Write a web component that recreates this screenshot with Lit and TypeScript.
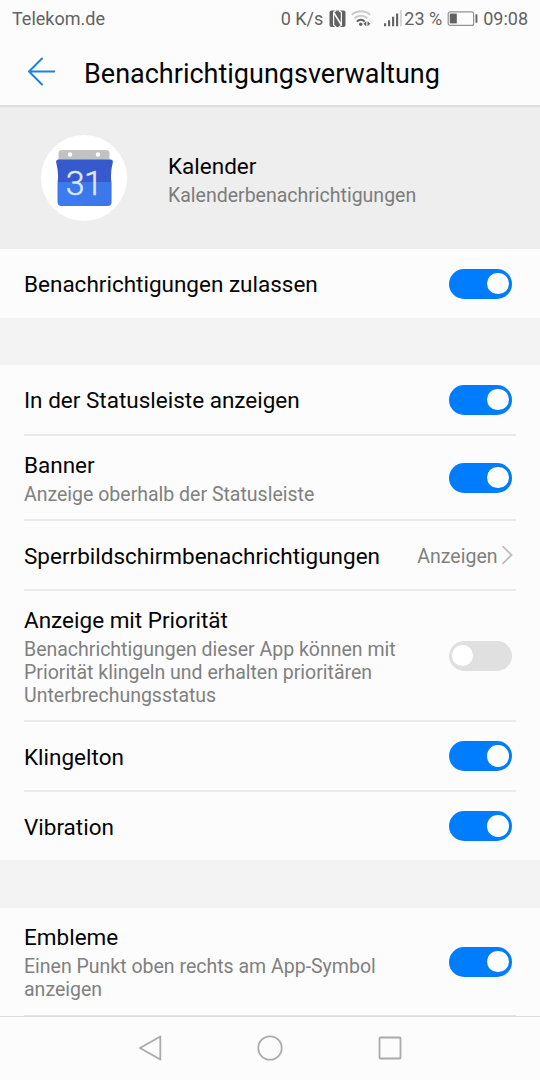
import { LitElement, html, css, svg, nothing } from "lit";
import { customElement, property } from "lit/decorators.js";
import { classMap } from "lit/directives/class-map.js";

@customElement("toggle-switch")
class ToggleSwitch extends LitElement {
  @property({ type: Boolean }) on = false;

  static styles = css`
    :host { display: block; flex: none; }
    .track {
      display: flex; align-items: center; box-sizing: border-box;
      width: 63px; height: 30px; padding: 0 3px; border-radius: 15px;
      background: #e0e0e0;
    }
    .track.on { background: #007dff; justify-content: flex-end; }
    .knob { width: 21.5px; height: 21.5px; border-radius: 50%; background: #fff; }
  `;

  render() {
    return html`<div class=${classMap({ track: true, on: this.on })} role="switch" aria-checked=${this.on}>
      <div class="knob"></div>
    </div>`;
  }
}

@customElement("status-bar")
class StatusBar extends LitElement {
  static styles = css`
    :host { display: flex; align-items: center; height: 38px; padding: 0 12px; color: #626262; font-size: 18px; line-height: 38px; }
    .carrier { flex: 1; }
    .icons { flex: none; display: block; }
    .nfc { margin: 0 5px 0 6px; }
    .signal { margin: 0 2px 0 13px; }
    .battery { margin: 0 5px; }
  `;

  render() {
    return html`
      <span class="carrier">Telekom.de</span>
      <span>0 K/s</span>
      <svg class="icons nfc" width="17" height="18" viewBox="0 0 17 18">
        <rect x="0.500" y="0.500" width="16" height="16.400" rx="2" fill="#626262" />
        <path d="M7.200 0.500L4.600 2.200V15L7.200 16.900M9.800 0.500L12.400 2.400V15.200L9.800 16.900" stroke="#fcfcfc" stroke-width="1.200" fill="none" />
        <path d="M4.800 2.800L12.200 14.600" stroke="#fcfcfc" stroke-width="1.600" fill="none" />
      </svg>
      <svg class="icons" width="20" height="18" viewBox="0 0 20 18" fill="none" stroke-width="1.9">
        <path d="M.8 4.700C6 .1 14 .1 19.200 4.700" stroke="#c9c9c9" />
        <path d="M3.500 8.300C7.200 4.800 12.800 4.800 16.500 8.300" stroke="#c9c9c9" />
        <path d="M5.800 11.700C8.200 9.100 11.300 9.100 13.700 11.700" stroke="#626262" />
        <circle cx="9.700" cy="14.300" r="1.700" fill="#626262" />
        <path d="M15.300 11.300V16.300L12.400 13.800ZM16.500 11.300V16.300L19.400 13.800Z" fill="#626262" />
      </svg>
      <svg class="icons signal" width="18" height="18" viewBox="0 0 18 18">
        <path d="M1.100 13.200v3M5.100 10.200v6M9.100 6.700v9.500M13.100 3.400v12.800" stroke="#626262" stroke-width="2.100" />
        <path d="M16.900 0v16.200" stroke="#d6d6d6" stroke-width="2" />
      </svg>
      <span>23 %</span>
      <svg class="icons battery" width="31" height="16" viewBox="0 0 31 16">
        <rect x="1.200" y=".8" width="25.400" height="13.600" rx="2" fill="none" stroke="#929292" stroke-width="1.200" />
        <rect x="2.800" y="2.600" width="7" height="9.800" fill="#626262" />
        <rect x="28.500" y="3.200" width="1.900" height="8.500" rx=".5" fill="#626262" />
      </svg>
      <span>09:08</span>`;
  }
}

@customElement("calendar-icon")
class CalendarIcon extends LitElement {
  static styles = css`
    :host { display: block; flex: none; width: 86px; height: 86px; }
    .digits { font: 300 34px Roboto, sans-serif; letter-spacing: -0.500px; }
  `;

  render() {
    return html`<svg width="86" height="86" viewBox="0 0 86 86">
      <defs><clipPath id="sheet"><path d="M17 24.5H70Q72.500 25 71.700 28Q69 38 70.500 48V67Q70.500 71 66.500 71H20.500Q16.500 71 16.500 67V48Q18 38 15.300 28Q14.500 25 17 24.500Z" /></clipPath></defs>
      <circle cx="43" cy="43" r="43" fill="#fff" />
      <path d="M17.500 26V18.500Q17.500 15 21 15H65Q68.500 15 68.500 18.500V26Z" fill="#c2c2c2" />
      <circle cx="29" cy="19.500" r="2.200" fill="#fff" /><circle cx="57" cy="19.500" r="2.200" fill="#fff" />
      <g clip-path="url(#sheet)">
        <rect x="14" y="23" width="60" height="24" fill="#3659ce" />
        <rect x="14" y="47" width="60" height="25" fill="#3c7bed" />
        <path d="M27 55L43 71H71V47H40Z" fill="#3975e4" opacity=".35" />
      </g>
      <text class="digits" x="43" y="59.500" text-anchor="middle" fill="#dfe7fa" stroke="#dfe7fa" stroke-width=".5">31</text>
    </svg>`;
  }
}

@customElement("setting-row")
class SettingRow extends LitElement {
  @property() label = "";
  @property() detail = "";
  @property() value = "";
  @property({ type: Boolean }) on = false;

  static styles = css`
    :host { display: flex; box-sizing: border-box; align-items: center; justify-content: space-between; margin: 0 24px; padding-right: 4.500px; }
    :host([divided]) { border-bottom: 2px solid #eaeaea; }
    .text { flex: 1; padding-top: 2px; }
    .text.two { padding-top: 1px; }
    .label { font-size: 22.500px; line-height: 29px; color: #050505; white-space: nowrap; }
    .detail { margin-top: 3px; font-size: 19.500px; line-height: 23px; color: #808080; max-width: 385px; }
    .value { display: flex; align-items: center; gap: 3px; margin-right: -1px; font-size: 19.500px; color: #808080; }
    .value span { padding-top: 2px; }
    .chevron { display: block; }
  `;

  render() {
    return html`
      <div class=${classMap({ text: true, two: !!this.detail })}>
        <div class="label">${this.label}</div>
        ${this.detail ? html`<div class="detail">${this.detail}</div>` : nothing}
      </div>
      ${this.value
        ? html`<div class="value"><span>${this.value}</span>
            <svg class="chevron" width="12" height="20" viewBox="0 0 12 20"><path d="M1.500 1.200L10.500 10L1.500 18.800" fill="none" stroke="#bcbcbc" stroke-width="1.800" /></svg>
          </div>`
        : html`<toggle-switch ?on=${this.on}></toggle-switch>`}`;
  }
}

@customElement("app-root")
class AppRoot extends LitElement {
  static styles = css`
    :host { display: flex; flex-direction: column; width: 540px; height: 1080px; overflow: hidden; background: #fcfcfc; font-family: Roboto, sans-serif; }
    header { display: flex; align-items: center; box-sizing: border-box; height: 69px; flex: none; padding: 0 27px; gap: 28px; border-bottom: 2px solid #dedede; }
    h1 { margin: 0; padding-top: 5px; font-size: 27px; font-weight: 400; line-height: 36px; color: #050505; }
    .back { display: block; flex: none; }
    .app { display: flex; align-items: center; box-sizing: border-box; flex: none; height: 142px; padding: 0 41px; gap: 41px; background: #eeeeee; }
    .heading { padding-top: 5px; }
    .name { font-size: 22.500px; line-height: 29px; color: #050505; }
    .about { margin-top: 1px; font-size: 19.500px; line-height: 27px; color: #7c7c7c; }
    .gap { flex: none; background: #f3f3f3; height: 47px; }
    .gap.tall { height: 48px; }
    .row { flex: none; }
    .h68 { height: 68px; }
    .h69 { height: 69px; }
    .h70 { height: 70px; }
    .h71 { height: 71px; }
    .h85 { height: 85px; }
    .h131 { height: 131px; }
    .h108 { height: 108px; }
    .last { border-bottom-width: 1px; border-bottom-color: #e4e4e4; }
    nav { flex: 1; display: flex; justify-content: center; align-items: center; gap: 96px; border-top: 1px solid #dedede; padding-bottom: 1px; }
    nav svg { display: block; }
  `;

  private navShape(shape: unknown) {
    return html`<svg width="24" height="28" viewBox="0 0 24 28" fill="none" stroke="#aaa" stroke-width="1.800" stroke-linejoin="round" overflow="visible">${shape}</svg>`;
  }

  render() {
    return html`
      <status-bar></status-bar>
      <header>
        <svg class="back" width="29" height="29" viewBox="0 0 29 29" fill="none" stroke="#1a82e2" stroke-width="2" stroke-linecap="round" stroke-linejoin="round">
          <path d="M15 1.500L2 14.500L15 27.500M2 14.500H27.300" />
        </svg>
        <h1>Benachrichtigungsverwaltung</h1>
      </header>
      <section class="app">
        <calendar-icon></calendar-icon>
        <div class="heading">
          <div class="name">Kalender</div>
          <div class="about">Kalenderbenachrichtigungen</div>
        </div>
      </section>
      <setting-row class="row h69" label="Benachrichtigungen zulassen" on></setting-row>
      <div class="gap"></div>
      <setting-row class="row h71" divided label="In der Statusleiste anzeigen" on></setting-row>
      <setting-row class="row h85" divided label="Banner" detail="Anzeige oberhalb der Statusleiste" on></setting-row>
      <setting-row class="row h70" divided label="Sperrbildschirmbenachrichtigungen" value="Anzeigen"></setting-row>
      <setting-row class="row h131" divided label="Anzeige mit Priorität" detail="Benachrichtigungen dieser App können mit Priorität klingeln und erhalten prioritären Unterbrechungsstatus"></setting-row>
      <setting-row class="row h70" divided label="Klingelton" on></setting-row>
      <setting-row class="row h68" label="Vibration" on></setting-row>
      <div class="gap tall"></div>
      <setting-row class="row h108 last" divided label="Embleme" detail="Einen Punkt oben rechts am App-Symbol anzeigen" on></setting-row>
      <nav>
        ${this.navShape(svg`<path d="M2 14L22.300 2.500V25.500Z" />`)}
        ${this.navShape(svg`<circle cx="12" cy="14" r="11.700" />`)}
        ${this.navShape(svg`<rect x="1.500" y="3.500" width="21" height="21" rx="1" />`)}
      </nav>`;
  }
}
